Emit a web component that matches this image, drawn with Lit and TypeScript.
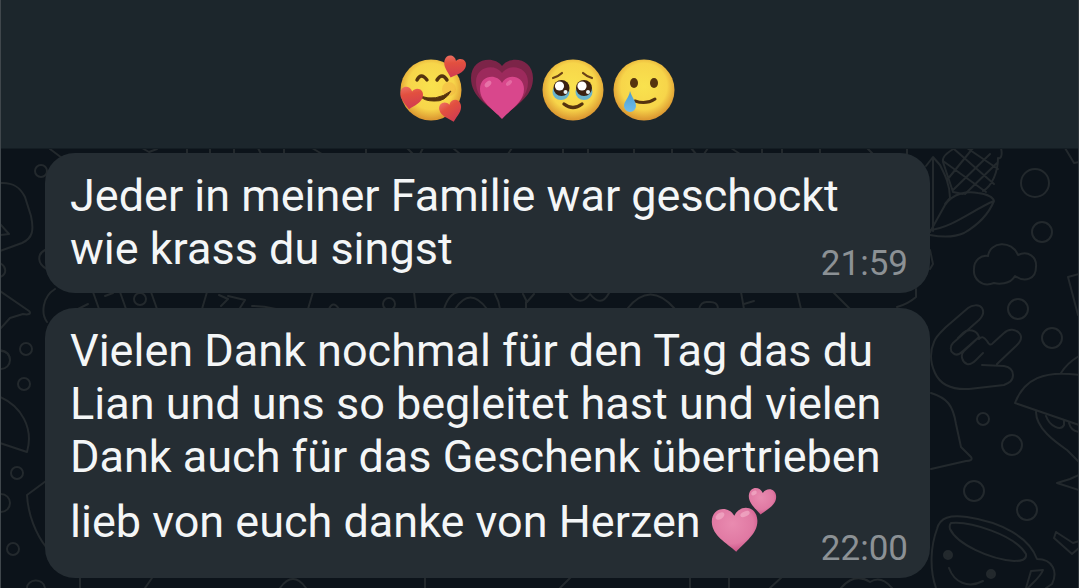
import { LitElement, html, css, svg } from "lit";
import { customElement, property } from "lit/decorators.js";

const gradients = svg`
  <defs>
    <radialGradient id="face" cx="50%" cy="44%" r="54%">
      <stop offset="0" stop-color="#f9e24e"></stop>
      <stop offset=".7" stop-color="#f7d54a"></stop>
      <stop offset="1" stop-color="#dd9a32"></stop>
    </radialGradient>
    <linearGradient id="red" x1="0" y1="0" x2=".4" y2="1">
      <stop offset="0" stop-color="#ee7468"></stop>
      <stop offset=".4" stop-color="#e2503f"></stop>
      <stop offset="1" stop-color="#d23c50"></stop>
    </linearGradient>
    <linearGradient id="tear" x1="0" y1="0" x2="0" y2="1">
      <stop offset="0" stop-color="#4a9bd0"></stop>
      <stop offset="1" stop-color="#6fbcea"></stop>
    </linearGradient>
    <radialGradient id="pink" cx="45%" cy="35%" r="65%">
      <stop offset="0" stop-color="#e98bb0"></stop>
      <stop offset=".7" stop-color="#e079a3"></stop>
      <stop offset="1" stop-color="#c95385"></stop>
    </radialGradient>
  </defs>`;

const HEART = "M0 -7C3 -13 12 -12 12 -4C12 3 5 7 0 12C-5 7 -12 3 -12 -4C-12 -12 -3 -13 0 -7Z";
const disc = svg`<circle cx="32" cy="32" r="30.5" fill="url(#face)"></circle>`;

const emojis: Record<string, { label: string; art: unknown }> = {
  love: {
    label: "🥰",
    art: svg`${disc}
      <circle cx="50" cy="31" r="7" fill="#ee9a3c" opacity=".3"></circle>
      <path d="M18 22Q22 14 28 22M38 22Q43 14 48 22" fill="none" stroke="#55330f" stroke-width="3.4" stroke-linecap="round"></path>
      <path d="M21 38Q37 44 52 33Q46 44 35 43Q25 43 21 38Z" fill="#55330f" stroke="#55330f" stroke-linejoin="round"></path>
      <path d=${HEART} transform="translate(55 9) rotate(18) scale(.92)" fill="url(#red)"></path>
      <path d=${HEART} transform="translate(12 40) rotate(10) scale(.95)" fill="url(#red)"></path>
      <path d=${HEART} transform="translate(52 53) rotate(-14) scale(.92)" fill="url(#red)"></path>`,
  },
  growing: {
    label: "💗",
    art: svg`
      <path d="M32 8C40 -3 63 0 63 20C63 40 44 48 32 60C20 48 1 40 1 20C1 0 24 -3 32 8Z" fill="#7c2448"></path>
      <path d="M32 15C39 5 58 8 58 24C58 41 43 49 32 60C21 49 6 41 6 24C6 8 25 5 32 15Z" fill="#9c2a5c"></path>
      <path d="M32 25C37 15 54 17 54 31C54 44 41 51 32 61C23 51 10 44 10 31C10 17 27 15 32 25Z" fill="#d9478c"></path>
      <ellipse cx="18" cy="26" rx="4" ry="2.4" transform="rotate(-45 18 26)" fill="#ec86b4" opacity=".7"></ellipse>
      <ellipse cx="39" cy="25" rx="3.6" ry="2" transform="rotate(-40 39 25)" fill="#ec86b4" opacity=".55"></ellipse>`,
  },
  holding: {
    label: "🥹",
    art: svg`${disc}
      <path d="M12 20Q18 18 21 15M42 15Q45 18 51 20" fill="none" stroke="#6b4216" stroke-width="2.2" stroke-linecap="round"></path>
      <ellipse cx="20" cy="34" rx="8.5" ry="8" fill="#69b3cc"></ellipse>
      <ellipse cx="43" cy="34" rx="8.5" ry="8" fill="#69b3cc"></ellipse>
      <circle cx="20.5" cy="30" r="8" fill="#3b2112"></circle>
      <circle cx="43" cy="30" r="8" fill="#3b2112"></circle>
      <circle cx="18.5" cy="28" r="4.6" fill="#fff"></circle>
      <circle cx="41" cy="28" r="4.6" fill="#fff"></circle>
      <circle cx="24.5" cy="34" r="2" fill="#e9f3f5"></circle>
      <circle cx="47" cy="34" r="2" fill="#e9f3f5"></circle>
      <path d="M23 46Q32 53 41 46" fill="none" stroke="#55330f" stroke-width="3.4" stroke-linecap="round"></path>`,
  },
  tear: {
    label: "🥲",
    art: svg`${disc}
      <ellipse cx="22" cy="25" rx="4" ry="5" fill="#55330f"></ellipse>
      <ellipse cx="42" cy="25" rx="4" ry="5" fill="#55330f"></ellipse>
      <path d="M23 43Q34 47 43 41" fill="none" stroke="#55330f" stroke-width="3" stroke-linecap="round"></path>
      <path d="M18 33C20 40 24 43 24 48A6 6 0 0 1 12 48C12 43 17 40 18 33Z" fill="url(#tear)"></path>`,
  },
  hearts: {
    label: "💕",
    art: svg`
      <path d=${HEART} transform="translate(23 41) rotate(-3) scale(1.9)" fill="url(#pink)"></path>
      <path d=${HEART} transform="translate(50 13) rotate(6) scale(1.14)" fill="url(#pink)"></path>
      <ellipse cx="8" cy="28" rx="5" ry="3" transform="rotate(-35 8 28)" fill="#f5b5cd" opacity=".6"></ellipse>
      <ellipse cx="33" cy="26" rx="5" ry="2.5" transform="rotate(-25 33 26)" fill="#f5b5cd" opacity=".6"></ellipse>
      <ellipse cx="42" cy="5" rx="3" ry="2" transform="rotate(-30 42 5)" fill="#f5b5cd" opacity=".6"></ellipse>`,
  },
};

@customElement("chat-emoji")
export class ChatEmoji extends LitElement {
  @property() name = "love";

  static styles = css`
    :host {
      display: inline-block;
      width: 64px;
      height: 64px;
    }
    .art {
      display: block;
      width: 100%;
      height: 100%;
      overflow: visible;
    }
  `;

  render() {
    const emoji = emojis[this.name];
    return html`<svg class="art" viewBox="0 0 64 64" role="img" aria-label=${emoji.label}>
      ${gradients}${emoji.art}
    </svg>`;
  }
}

@customElement("chat-bubble")
export class ChatBubble extends LitElement {
  @property() time = "";

  static styles = css`
    :host {
      display: grid;
      padding: 16px 22px 9px 25px;
      border-radius: 30px;
      background: #252d33;
    }
    .text,
    .time {
      grid-area: 1 / 1;
    }
    .text {
      margin: 0 0 9px;
      font-size: 45px;
      line-height: 53px;
      color: #f4f6f7;
    }
    .time {
      align-self: end;
      justify-self: end;
      font-size: 35px;
      line-height: 40px;
      color: #8c9195;
    }
  `;

  render() {
    return html`<p class="text"><slot></slot></p>
      <time class="time" datetime=${this.time}>${this.time}</time>`;
  }
}

@customElement("app-root")
export class AppRoot extends LitElement {
  static styles = css`
    :host {
      display: block;
      min-height: 100vh;
      box-sizing: border-box;
      position: relative;
      overflow: hidden;
      background: #0c131a;
      border-left: 1px solid #40474c;
      border-right: 1px solid #30373c;
      font-family: Roboto, "Liberation Sans", sans-serif;
    }
    .wallpaper {
      position: absolute;
      inset: 0;
      width: 100%;
      height: 100%;
      fill: none;
      stroke: #23292d;
      stroke-width: 2;
      stroke-linecap: round;
      stroke-linejoin: round;
    }
    .solid {
      fill: #23292d;
    }
    .reactions {
      position: relative;
      display: flex;
      justify-content: center;
      gap: 7px;
      padding: 58px 5px 26px 0;
      background: #1c262c;
      border-bottom: 1px solid #141d23;
    }
    .messages {
      position: relative;
      display: flex;
      flex-direction: column;
      gap: 15px;
      padding: 4px 148px 10px 44px;
    }
    .inline {
      margin: 5px 0 8px;
      vertical-align: -23px;
    }
  `;

  render() {
    return html`
      <svg class="wallpaper" viewBox="1 0 1077 588" preserveAspectRatio="xMidYMid slice" aria-hidden="true">
        <path d="M0 183C13 182 20 187 25 197L31 216C34 230 33 238 22 243L0 251M0 224L9 234L0 235"></path>
        <circle cx="41" cy="171" r="6"></circle>
        <path d="M50 149L62 158M45 250C37 254 37 264 47 269M0 291L29 311C32 314 28 315 23 314L10 318L0 329"></path>
        <path d="M55 289C42 297 41 314 47 322M0 263C7 267 7 274 0 277M0 350C7 351 10 354 10 360"></path>
        <circle cx="26" cy="349" r="6"></circle><circle cx="1" cy="360" r="9"></circle>
        <circle cx="24" cy="384" r="6"></circle>
        <path d="M0 397C21 406 34 428 27 452L0 443M46 481L27 495C28 515 36 534 46 547"></path>
        <circle cx="17" cy="473" r="6"></circle><circle cx="1" cy="503" r="9"></circle>
        <circle cx="13" cy="549" r="6"></circle>
        <path d="M27 588C27 579 43 577 45 588"></path>

        <path d="M93 292L99 309M78 309L88 304M105 296L113 293M120 292L126 309M151 292L157 309M207 292L202 309M219 295L228 299L221 306M228 296L245 300L240 308M252 306Q263 306 276 309M313 292L308 309M414 292L416 309M444 309Q449 293 459 292M455 309Q470 286 487 309M495 294Q499 301 500 309"></path>
        <circle cx="140" cy="299" r="6"></circle><circle cx="389" cy="304" r="6"></circle>
        <path d="M329 309Q333 300 339 309M523 294L527 302L534 294M526 302V309M570 293Q580 308 590 294Q601 308 609 293M627 309Q650 280 675 309M699 309Q701 301 708 302Q718 301 718 309M741 292L744 309M744 304L754 301M797 292L801 309M833 292L850 309M916 289V297Q908 304 897 307"></path>
        <path d="M142 148L149 152L157 149M187 148V154M210 148V154M234 148V154M258 148L261 154M284 148V154M312 148L322 154M366 148V154M407 148L413 154M423 148L420 154M453 148L460 154M512 148L508 154M563 148V154M588 148V154M634 148V154M672 148V154M691 148L696 154M708 148L704 154M731 148L740 154M762 148V154M782 148V154M820 148V154M867 148L873 154M907 148V154"></path>

        <path d="M926 166L933 157L940 165C944 173 950 184 950 198L945 204M933 158V231M955 148C946 153 942 158 943 162L953 192L963 194M1001 148C1003 157 1000 159 998 158C998 172 992 186 983 191M967 148L998 169M954 149L994 184M943 161L986 192M947 180L973 148M953 190L990 154M965 194L997 163"></path>
        <path d="M930 232L945 205C953 193 967 191 978 193C986 194 993 197 994 201C989 213 978 225 964 233C953 238 941 237 930 235M930 230C952 228 974 209 994 201"></path>
        <path d="M930 250L933 264L930 269"></path>
        <circle cx="1035" cy="183" r="14"></circle><circle cx="1042" cy="232" r="10"></circle>
        <path d="M988 256C990 241 1012 240 1018 255C1028 250 1037 257 1036 267C1036 279 1025 283 1015 276C1010 285 998 284 994 283C981 288 973 278 974 269C974 260 981 255 988 256Z"></path>
        <path d="M1065 148L1074 163L1079 162M1079 274L1068 277L1078 315"></path>
        <circle cx="1018" cy="309" r="10"></circle><circle cx="1052" cy="338" r="10"></circle>
        <path d="M982 365L1004 366C1010 367 1013 370 1013 375C1013 381 1009 383 1004 385L969 389C951 390 940 384 935 373C930 362 930 351 934 342C936 336 941 332 946 327L968 308C972 305 979 304 982 308C985 313 982 317 979 320L953 343C950 346 950 351 953 353C956 356 960 354 963 351L979 337M958 338L963 333C968 328 977 330 979 337L964 351C960 355 962 362 967 364C971 365 974 362 976 360L983 353M979 339C982 336 984 337 987 341Q990 347 993 343L1004 333C1009 328 1016 329 1020 334C1023 339 1019 343 1016 346L997 364"></path>
        <path d="M931 393C947 398 953 405 956 424L961 447L971 457C973 460 970 461 966 461L931 469"></path>
        <circle cx="983" cy="419" r="6"></circle><circle cx="1012" cy="445" r="10"></circle>
        <circle cx="974" cy="491" r="10"></circle><circle cx="1027" cy="510" r="10"></circle>
        <path d="M1015 403C1024 379 1044 370 1079 375M1015 403L1079 425M1061 373Q1067 363 1079 356M1036 412C1036 429 1057 443 1067 450L1079 462M1046 416C1050 427 1061 431 1064 425V421M1069 423Q1071 431 1079 432M1079 475L1070 479L1057 483L1079 490"></path>
        <path d="M936 588C929 568 931 545 937 529C940 517 950 515 967 517C1001 522 1029 537 1037 559C1053 559 1058 572 1052 584L1046 588M951 523C970 521 1015 535 1026 554C1027 560 1021 561 1014 561C989 559 957 544 950 529C949 525 950 524 951 523ZM949 568C954 582 968 589 983 581M1026 588L1031 571L1043 570C1040 578 1032 583 1028 588M1056 532L1073 543L1079 541M1056 532L1054 538L1072 554L1079 548"></path>
        <circle class="solid" cx="948" cy="555" r="4"></circle><circle class="solid" cx="991" cy="574" r="4"></circle>
        <path d="M80 588V577M145 588L152 578M280 588Q293 570 306 588M425 588V577M560 588L571 577M690 588V577M729 577V588M770 588L782 577M841 588Q855 572 870 582Q881 575 892 588"></path>
      </svg>
      <header class="reactions">
        <chat-emoji name="love"></chat-emoji>
        <chat-emoji name="growing"></chat-emoji>
        <chat-emoji name="holding"></chat-emoji>
        <chat-emoji name="tear"></chat-emoji>
      </header>
      <main class="messages">
        <chat-bubble time="21:59">Jeder in meiner Familie war geschockt wie krass du singst</chat-bubble>
        <chat-bubble time="22:00"
          >Vielen Dank nochmal für den Tag das du Lian und uns so begleitet hast und vielen Dank auch für das
          Geschenk übertrieben lieb von euch danke von Herzen <chat-emoji class="inline" name="hearts"></chat-emoji
        ></chat-bubble>
      </main>
    `;
  }
}
